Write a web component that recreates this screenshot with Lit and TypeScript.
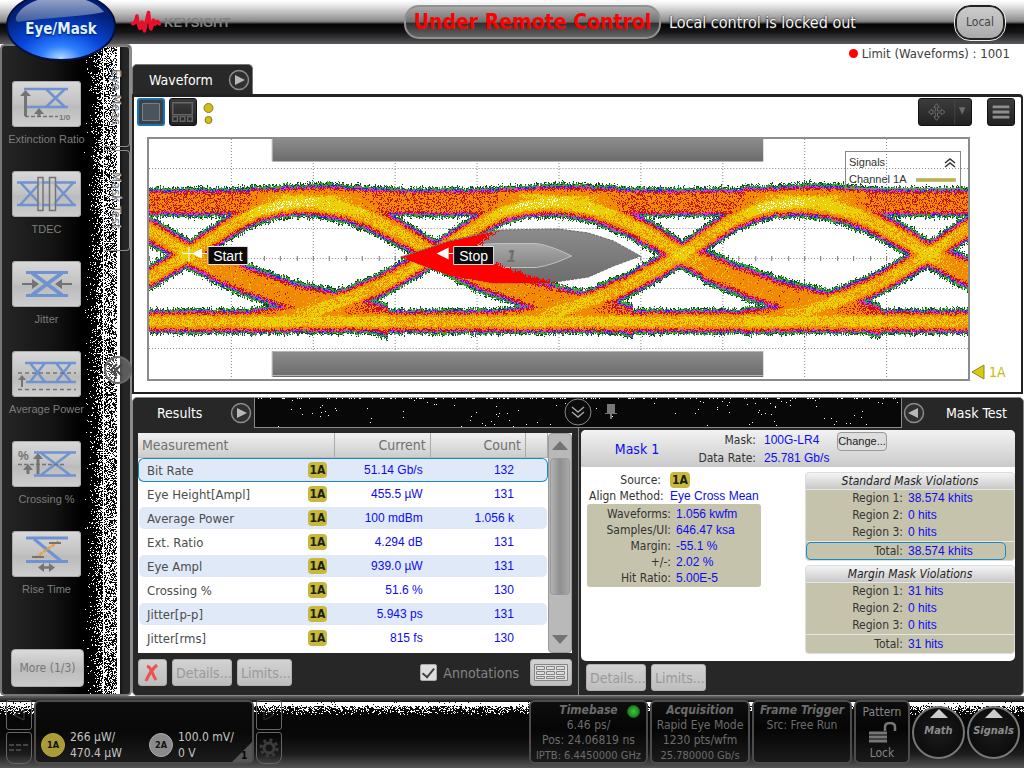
import { LitElement, html, css, svg } from "lit";
import { customElement } from "lit/decorators.js";
import { classMap } from "lit/directives/class-map.js";

// ---------- deterministic pixel painting helpers ----------

function randomSource(seed: number) {
  let s = seed;
  return () => {
    s = (s + 0x6d2b79f5) | 0;
    let t = Math.imul(s ^ (s >>> 15), 1 | s);
    t = (t + Math.imul(t ^ (t >>> 7), 61 | t)) ^ t;
    return ((t ^ (t >>> 14)) >>> 0) / 4294967296;
  };
}

function speckle(w: number, h: number, density: (x: number, y: number) => number, seed: number) {
  const rnd = randomSource(seed);
  let d = "";
  for (let y = 0; y < h; y++) {
    let start = -1;
    for (let x = 0; x <= w; x++) {
      const on = x < w && rnd() < density(x, y);
      if (on && start < 0) start = x;
      if (!on && start >= 0) {
        d += `M${start} ${y}h${x - start}v1h${start - x}z`;
        start = -1;
      }
    }
  }
  return d;
}

type Point = [number, number];

function along(points: Point[], x: number) {
  if (x <= points[0][0]) return points[0][1];
  for (let i = 1; i < points.length; i++) {
    if (x <= points[i][0]) {
      const [x0, y0] = points[i - 1];
      const [x1, y1] = points[i];
      return y0 + ((y1 - y0) * (x - x0)) / (x1 - x0);
    }
  }
  return points[points.length - 1][1];
}

function inside(poly: Point[], x: number, y: number) {
  let hit = false;
  for (let i = 0, j = poly.length - 1; i < poly.length; j = i++) {
    const [xi, yi] = poly[i];
    const [xj, yj] = poly[j];
    if (yi > y !== yj > y && x < ((xj - xi) * (y - yi)) / (yj - yi) + xi) hit = !hit;
  }
  return hit;
}

// ---------- eye diagram ----------

const PLOT_W = 820;
const PLOT_H = 240;
const CROSSINGS = [-208, 39, 285, 533, 780, 1027];

// Vertical centre of the rising and falling edges, by distance from a crossing.
const RISING: Point[] = [[-185, 182], [-150, 178], [-120, 171], [-93, 162], [-56, 147], [-25, 130], [0, 115], [25, 98], [48, 83], [70, 72], [90, 66], [115, 63], [150, 62], [185, 62]];
const FALLING: Point[] = [[-185, 62], [-150, 62], [-120, 63], [-93, 68], [-70, 76], [-53, 84], [-25, 99], [0, 115], [25, 127], [53, 139], [80, 149], [103, 157], [130, 163], [155, 169], [180, 176], [200, 182]];

// Strength of each edge: it fades where the edge settles on a rail.
const RISING_CAP: Point[] = [[-185, 0.4], [-140, 0.72], [-110, 0.8], [0, 0.84], [50, 0.84], [90, 0.96], [125, 0.93], [185, 0.5]];
const FALLING_CAP: Point[] = [[-185, 0.5], [-140, 0.84], [-90, 0.86], [0, 0.84], [30, 0.7], [130, 0.66], [200, 0.45]];

const MASK: Point[] = [[252, 118], [300, 102], [350, 91], [410, 90], [440, 94], [465, 102], [492, 117], [465, 127], [440, 138], [400, 144], [345, 144], [300, 136]];
const HITS: Point[] = [[250, 117], [300, 95], [352, 86], [341, 96], [328, 107], [328, 128], [360, 135], [398, 148], [345, 150], [300, 140]];

const COLORS = ["#0d4a16", "#2cae2c", "#2a1ef0", "#f22ee0", "#c3160f", "#f08a06", "#ead006", "#fffbe6", "#ff0000"];

function level(v: number) {
  if (v <= 0) return -1;
  if (v < 0.06) return 0;
  if (v < 0.2) return 1;
  if (v < 0.27) return 2;
  if (v < 0.37) return 3;
  if (v < 0.52) return 4;
  if (v < 0.82) return 5;
  if (v < 1.1) return 6;
  return 7;
}

// Soft rim, then a quick climb to a flat core.
function profile(p: number, cap: number) {
  return Math.min(p < 0.3 ? p * 1.25 : 0.375 + (p - 0.3) * 1.2, cap);
}

function paintEye() {
  const rnd = randomSource(7);
  const paths = COLORS.map(() => "");
  const field: number[][] = [];
  for (let x = 0; x < PLOT_W; x++) {
    const bands: number[][] = [];
    let hump = 0;
    for (let i = 0; i < CROSSINGS.length; i++) {
      const d = x - CROSSINGS[i];
      const mid = (x - (CROSSINGS[i] + 132)) / 50;
      hump = Math.max(hump, Math.exp(-mid * mid));
      if (d > -185 && d < 185) bands.push([along(RISING, d), 14, along(RISING_CAP, d)]);
      if (d > -185 && d < 200) bands.push([along(FALLING, d), d > 20 ? 18 : 16, along(FALLING_CAP, d)]);
    }
    bands.push([63 - hump * 2, 15 + hump * 3, 0.56]);
    bands.push([182, 13, 0.84]);
    const up = rnd() * 3 - 1.5;
    const col: number[] = [];
    for (let y = 0; y < PLOT_H; y++) {
      let best = -1;
      let total = 0;
      for (const [c, h, cap] of bands) {
        const p = 1 - Math.abs(y - c) / (h + up);
        if (p > 0) {
          const q = profile(p, cap);
          best = Math.max(best, q);
          total += q;
        } else best = Math.max(best, p * 0.9);
      }
      let v = best;
      if (best > 0) v = best + Math.min(0.1, (total - best) * 0.12);
      const grain = rnd() + rnd() - 1;
      v += grain * (v > 0.3 ? 0.2 : 0.12);
      if (y < 42) v = Math.min(v, 0.1);
      col.push(v);
    }
    field.push(col);
  }
  for (let y = 0; y < PLOT_H; y++) {
    let start = 0;
    let cur = -1;
    for (let x = 0; x <= PLOT_W; x++) {
      let k = -1;
      if (x < PLOT_W) {
        k = level(field[x][y]);
        if (y > 88 && y < 146 && inside(MASK, x, y)) {
          const ragged = inside(HITS, x + Math.round(rnd() * 8 - 4), y);
          if (k >= 0 || ragged) k = 8;
        }
      }
      if (k !== cur) {
        if (cur >= 0) paths[cur] += `M${start} ${y}h${x - start}v1h${start - x}z`;
        start = x;
        cur = k;
      }
    }
  }
  return paths;
}

const EYE = paintEye();
const SIDE_NOISE = speckle(38, 650, (x) => {
  if (x > 34) return 1;
  if (x > 22) return 0.52;
  if (x === 21) return 1;
  return Math.pow(x / 22, 2) * 0.5;
}, 11);
const FOOT_NOISE = speckle(1024, 16, (_x, y) => (y < 4 ? 0.97 : Math.max(0, 0.55 - (y - 4) * 0.06)), 23);
const STRIP_NOISE = speckle(650, 29, (_x, y) => (y < 1 ? 0.2 : 0.005), 31);

const baseStyles = css`
  :host { display: block; box-sizing: border-box; font-family: "DejaVu Sans Condensed", "DejaVu Sans", sans-serif; }
  * { box-sizing: border-box; }
  button { font-family: inherit; margin: 0; padding: 0; border: 0; cursor: pointer; background: none; }
  svg { display: block; }
`;

const roundArrow = (left: boolean) => svg`
  <circle cx="11" cy="11" r="9.5" fill="#303030" stroke="#8c8c8c" stroke-width="1.5"/>
  <path d=${left ? "M15 6v10L5 11z" : "M7 6v10l10-5z"} fill="#b8b8b8"/>`;

// ---------- header ----------

@customElement("scope-header")
class ScopeHeader extends LitElement {
  static styles = [baseStyles, css`
    :host { position: relative; z-index: 2; }
    .bar { height: 44px; display: flex; align-items: center; background: linear-gradient(#fff 0, #f0f0f0 4px, #8c8c8c 21px, #4a4a4a 23px, #050505 24px, #141414 32px, #5a585c 44px); }
    .menu { position: absolute; left: 6px; top: -9px; width: 110px; height: 70px; }
    .menu svg { width: 100%; height: 100%; }
    .menu span { position: absolute; inset: 0; display: grid; place-items: center; padding-top: 6px; color: #dff0ff; font-weight: bold; font-size: 15px; text-shadow: 0 1px 2px #001a50; }
    .brand { flex: 0 0 273px; margin-left: 131px; display: flex; align-items: center; gap: 3px; color: #808080; font: bold 13px "Liberation Sans", sans-serif; }
    .remote { height: 34px; width: 257px; flex: none; border: 2px solid #929292; border-radius: 15px; background: linear-gradient(#aaa, #6e6e6e 50%, #303030 54%, #666); color: #f00; font-weight: bold; font-size: 21px; line-height: 30px; text-align: center; white-space: nowrap; }
    .locked { flex: 1; margin-left: 8px; color: #f4f4f4; font-size: 16px; text-shadow: 0 0 2px #000, 0 1px 1px #333; white-space: nowrap; }
    .local { width: 50px; height: 35px; margin-right: 19px; border: 2px solid #222; outline: 1px solid #eee; border-radius: 15px; background: linear-gradient(#ccc, #aaa); font-size: 12px; color: #444; }
  `];
  render() {
    return html`
      <header class="bar">
        <div class="brand">
          <svg width="30" height="25" viewBox="0 0 30 25"><path d="M1.500 13.500Q4 15 6 6Q7 15 9 18.500Q10.500 15 11 12Q12 18 13.500 21Q16 8 17.500 2.500Q19 15 20 19Q22 15 22.500 10Q24 17 25.500 12Q26.500 10 28.500 14" fill="none" stroke="#e8102c" stroke-width="3.500" stroke-linejoin="round" stroke-linecap="round"/></svg>
          KEYSIGHT
        </div>
        <div class="remote">Under Remote Control</div>
        <div class="locked">Local control is locked out</div>
        <button class="local">Local</button>
      </header>
      <button class="menu">
        <svg viewBox="0 0 110 70">
          <defs>
            <radialGradient id="orb" cx=".5" cy=".98" r=".75"><stop offset="0" stop-color="#b5dcff"/><stop offset=".25" stop-color="#2f80ff"/><stop offset=".55" stop-color="#0646d8"/><stop offset="1" stop-color="#021f78"/></radialGradient>
            <linearGradient id="gloss" x2="0" y2="1"><stop offset="0" stop-color="#e0e8f4"/><stop offset="1" stop-color="#5570a4"/></linearGradient>
          </defs>
          <ellipse cx="55" cy="35" rx="54" ry="34" fill="url(#orb)" stroke="#05103c" stroke-width="2"/>
          <path d="M13 21C30 0 82 0 98 21C75 26 45 26 12 31C8 29 10 25 13 21Z" fill="url(#gloss)" opacity=".7"/>
        </svg>
        <span>Eye/Mask</span>
      </button>`;
  }
}

// ---------- side bar ----------

const B = "#6f93d0";
const G = "#747474";
const tools = [
  { name: "Extinction Ratio", icon: svg`<path d="M12 8H56M14 26H56M34 8L53 26M53 8L34 26" stroke=${B} stroke-width="2.5"/><path d="M13.500 35V12" stroke=${G} stroke-width="3"/><path d="M8 15l5.500-6 5.500 6zM22 33l5-6 5 6z" fill=${G}/><path d="M27 32v3" stroke=${G} stroke-width="3"/><path d="M13 35.500H46" stroke=${G} stroke-width="1.500" stroke-dasharray="4 2"/><text x="47" y="39" font-size="8" font-weight="bold" fill=${G}>1/0</text>` },
  { name: "TDEC", icon: svg`<path d="M5 11.500H64M5 34H64M8 11L29 34M29 11L8 34M41 11L62 34M62 11L41 34" stroke=${B} stroke-width="2.500"/><path d="M26 6.500h5v33h-5zM37.500 6.500h6v33h-6z" fill="#ccc" fill-opacity=".6" stroke=${G} stroke-width="1.500"/>` },
  { name: "Jitter", icon: svg`<path d="M14 11.500H56M14 34.500H56" stroke=${B} stroke-width="3"/><path d="M20 12L50 34M50 12L20 34" stroke=${B} stroke-width="4"/><path d="M10 23H22M60 23H48" stroke=${G} stroke-width="2"/><path d="M20 18v10l7-5zM50 18v10l-7-5z" fill=${G}/>` },
  { name: "Average Power", icon: svg`<path d="M13 12H64M14 31H64M18 12L33 31M33 12L18 31M44 12L59 31M59 12L44 31" stroke=${B} stroke-width="2.500"/><path d="M6 22H64M6 38.500H64" stroke=${G} stroke-width="1.500" stroke-dasharray="4 3"/><path d="M10 36V27" stroke=${G} stroke-width="2"/><path d="M6 29l4-5 4 5z" fill=${G}/>` },
  { name: "Crossing %", icon: svg`<path d="M22 11.500H64M22 34.500H64M29 12L58 34M58 12L29 34" stroke=${B} stroke-width="2.500"/><path d="M6 23.500H52" stroke=${G} stroke-width="1.500" stroke-dasharray="4 2"/><path d="M16 33V28M26 33V16" stroke=${G} stroke-width="3"/><path d="M11 29l5-6 5 6zM21 18l5-6 5 6z" fill=${G}/><text x="6" y="19" font-size="12" font-weight="bold" fill=${G}>%</text>` },
  { name: "Rise Time", icon: svg`<path d="M14 7H56M14 30.500H56" stroke=${B} stroke-width="3"/><path d="M22 8L49 30" stroke=${B} stroke-width="3"/><path d="M23 27L47 10" stroke="#eaa040" stroke-width="2.500" stroke-dasharray="4 1"/><path d="M20 26h12M37 12h12" stroke=${G} stroke-width="2"/><path d="M29 36.500h12" stroke=${G} stroke-width="2.500"/><path d="M32 32l-6 4.500 6 4.500zM37 32l6 4.500-6 4.500z" fill=${G}/>` },
];

@customElement("scope-sidebar")
class ScopeSidebar extends LitElement {
  static styles = [baseStyles, css`
    :host { position: relative; display: grid; grid-template-columns: 102px 1fr; background: linear-gradient(90deg, #262626, #141414 50px, #000 80px, #000 102px, #0a0a0a 116px, #262626 122px); border: 2px solid #777; border-right-color: #8b8b8b; border-radius: 5px; min-height: 0; }
    .noise { position: absolute; left: 80px; top: 0; width: 38px; height: 100%; }
    .tools { position: relative; display: flex; flex-direction: column; align-items: flex-start; padding: 35px 0 7px 9px; gap: 24px; }
    .tool { width: 71px; height: 66px; display: flex; flex-direction: column; align-items: center; gap: 4px; color: #7c7c7c; font: 11px/16px "Liberation Sans Narrow", "Liberation Sans", sans-serif; white-space: nowrap; }
    .face { flex: none; width: 69px; height: 46px; border-radius: 4px; background: linear-gradient(#d9d9d9, #c2c2c2 50%, #bbb 55%, #cfcfcf); box-shadow: inset 0 0 0 1px #aaa; }
    .more { margin-top: auto; width: 73px; height: 38px; flex: none; border: 1px solid #aaa; border-radius: 4px; background: linear-gradient(#dadada, #bdbdbd 55%, #cacaca); color: #777; font-size: 12px; white-space: nowrap; }
    .tabs { position: relative; display: flex; flex-direction: column; gap: 3px; }
    .tab { height: 101px; border: 1px solid #8b8b8b; border-left: 0; border-radius: 0 4px 4px 0; writing-mode: vertical-rl; color: #777; font-size: 13px; text-align: center; text-shadow: 1px 0 #eee; }
    .fold { position: absolute; right: -2px; top: 310px; width: 28px; height: 28px; }
  `];
  render() {
    return html`
      <svg class="noise" viewBox="0 0 38 650" preserveAspectRatio="none" shape-rendering="crispEdges"><path d=${SIDE_NOISE} fill="#fff"/></svg>
      <nav class="tools">
        ${tools.map((t) => html`<button class="tool"><svg class="face" viewBox="0 0 69 46" fill="none">${t.icon}</svg>${t.name}</button>`)}
        <button class="more">More (1/3)</button>
      </nav>
      <nav class="tabs">
        <button class="tab">Eye Meas</button>
        <button class="tab">Mask Test</button>
        <button class="fold" aria-label="Collapse"><svg viewBox="0 0 28 28" fill="none"><circle cx="14" cy="14" r="13" fill="#fff" fill-opacity=".25" stroke="#6a6a6a" stroke-width="2"/><path d="M13 8l-6 6 6 6M18 8l-6 6 6 6" stroke="#444" stroke-width="2"/></svg></button>
      </nav>`;
  }
}

// ---------- waveform panel ----------

@customElement("scope-waveform")
class ScopeWaveform extends LitElement {
  static styles = [baseStyles, css`
    :host { display: flex; flex-direction: column; min-height: 0; }
    .top { display: flex; align-items: flex-start; justify-content: space-between; height: 50px; }
    .tab { align-self: flex-end; width: 121px; height: 30px; display: flex; align-items: center; justify-content: space-between; padding: 0 2px 0 16px; border: 1px solid #777; border-bottom: 0; border-radius: 5px 5px 0 0; background: #282828; color: #fff; font-size: 14px; }
    .limit { display: flex; align-items: center; gap: 4px; padding: 2px 14px 0 0; font-size: 13px; color: #3c3c3c; }
    .led { width: 9px; height: 9px; border-radius: 50%; background: #f00; }
    .panel { flex: 1; min-height: 0; display: flex; flex-direction: column; margin-right: 1px; border: 2px solid #222; border-top-width: 3px; border-radius: 0 4px 0 0; background: #fff; }
    .toolbar { display: flex; gap: 4px; padding: 1px 6px 0 3px; height: 40px; }
    .push { flex: 1; }
    .tool { width: 28px; height: 28px; border: 1px solid #111; border-radius: 3px; background: linear-gradient(#3c3c3c, #222); }
    .tool.on { border: 2px solid #1673b8; background: #3b4246; }
    .tool svg { width: 100%; height: 100%; }
    .wide { width: 54px; }
    .gap { margin-left: 11px; }
    .view { flex: 1; min-height: 0; display: flex; padding: 0 0 11px 13px; }
    .plot { position: relative; flex: 1; min-width: 0; border: 2px solid #8c8c8c; }
    .plot > svg { width: 100%; height: 100%; }
    .axis { width: 51px; display: flex; flex-direction: column; justify-content: flex-end; color: #c7ba08; font-size: 14px; }
    .mark { display: flex; align-items: center; gap: 3px; }
    .legend { position: absolute; right: 7px; top: 12px; width: 116px; height: 38px; border: 1px solid #888; padding: 2px 4px 0 3px; font: 11px/17px "Liberation Sans", sans-serif; color: #333; }
    .line { display: flex; align-items: center; justify-content: space-between; white-space: nowrap; }
    .swatch { width: 40px; height: 4px; background: #c9b515; border: 1px solid #bba; }
  `];
  render() {
    const grid: string[] = [];
    for (let i = 1; i < 10; i++) grid.push(`M${i * 82 + 0.5} 0V240`);
    for (const y of [30, 60, 90, 120, 150, 180, 210]) grid.push(`M0 ${y - 0.5}H820`);
    const ticks: string[] = [];
    for (let i = 0; i < 51; i++) ticks.push(`M${Math.round(i * 16.4) + 0.5} 117v5`);
    return html`
      <div class="top">
        <div class="tab">Waveform <button aria-label="Next view"><svg width="22" height="22">${roundArrow(false)}</svg></button></div>
        <div class="limit"><span class="led"></span>Limit (Waveforms) : 1001</div>
      </div>
      <section class="panel">
        <div class="toolbar">
          <button class="tool on" aria-label="Single view"><svg viewBox="0 0 24 24"><path d="M3.500 3.500h17v17h-17z" fill="#4b545b" stroke="#76818c"/></svg></button>
          <button class="tool" aria-label="Tiled view"><svg viewBox="0 0 28 28" fill="none" stroke="#666" stroke-width="1.500"><path d="M3 4h21v13H3zM3 19h5v5H3zM11 19h5v5h-5zM19 19h5v5h-5z"/></svg></button>
          <svg width="16" height="28"><circle cx="7.500" cy="10" r="4.500" fill="#d2bd12" stroke="#8a7b20"/><circle cx="7.500" cy="22" r="3.500" fill="#d2bd12" stroke="#8a7b20"/></svg>
          <span class="push"></span>
          <button class="tool wide" aria-label="Pan"><svg viewBox="0 0 54 28" fill="none"><path d="M18 5l3 4h-2v4h4v-2l4 3-4 3v-2h-4v4h2l-3 4-3-4h2v-4h-4v2l-4-3 4-3v2h4V9h-2z" stroke="#6c6c6c"/><path d="M37.500 1v26" stroke="#444"/><path d="M42 9h7l-3.500 8z" fill="#6c6c6c"/></svg></button>
          <button class="tool gap" aria-label="Menu"><svg viewBox="0 0 28 28"><path d="M5 8.500h18M5 14h18M5 19.500h18" stroke="#8e8e8e" stroke-width="3"/></svg></button>
        </div>
        <div class="view">
          <div class="plot">
            <svg viewBox="0 0 820 240" preserveAspectRatio="none">
              <defs>
                <linearGradient id="mask" x2="0" y2="1"><stop offset="0" stop-color="#8c8c8c"/><stop offset="1" stop-color="#6c6c6c"/></linearGradient>
                <linearGradient id="core" x2="0" y2="1"><stop offset="0" stop-color="#aaa"/><stop offset="1" stop-color="#858585"/></linearGradient>
              </defs>
              <path d=${grid.join("")} stroke="#888" stroke-dasharray="1 2" shape-rendering="crispEdges"/>
              <path d=${ticks.join("")} stroke="#777" shape-rendering="crispEdges"/>
              <path d="M123 0H615V22H123z" fill="url(#mask)"/>
              <path d="M123 212H615V238H123z" fill="url(#mask)"/>
              <path d="M123.500 0V22.500H615M123.500 238V212.500H615M123 236.500H615" fill="none" stroke="#b5b5b5"/>
              <g shape-rendering="crispEdges">${EYE.slice(0, 8).map((d, i) => svg`<path d=${d} fill=${COLORS[i]}/>`)}</g>
              <path d=${"M" + MASK.map((p) => p.join(" ")).join("L") + "Z"} fill="url(#mask)" stroke="#666" stroke-dasharray="3 1"/>
              <path d="M290 117Q325 104 350 104.500H388Q404 107 423 117Q404 126 388 128.500H350Q325 128 290 117Z" fill="url(#core)" stroke="#c2c2c2"/>
              <text x="358" y="123" font-family="DejaVu Sans Condensed, DejaVu Sans, sans-serif" font-size="16" font-style="italic" font-weight="bold" fill="#707070">1</text>
              <path d=${EYE[8]} fill=${COLORS[8]} shape-rendering="crispEdges"/>
              <path d="M43 114.500l10-5v10zM288 114.500l12-6v12z" fill="#fff"/><path d="M34 114.500h24M300 114.500h7M40 108v14" stroke="#fff"/>
              <g font-family="Liberation Sans, sans-serif" font-size="14" fill="#fff" text-anchor="middle">
                <path d="M59 107.500h40v18h-40zM305 107.500h40v18h-40z" fill="#0b0b0b" stroke="#e4e4e4"/>
                <text x="79" y="122">Start</text><text x="325" y="122">Stop</text>
              </g>
            </svg>
            <div class="legend">
              <div class="line">Signals <svg width="12" height="10" fill="none" stroke="#333" stroke-width="1.500"><path d="M1 5l5-4 5 4M1 9l5-4 5 4"/></svg></div>
              <div class="line">Channel 1A <span class="swatch"></span></div>
            </div>
          </div>
          <div class="axis"><div class="mark"><svg width="16" height="18"><path d="M2 9l12-7v14z" fill="#d8cb10" stroke="#8a8530"/></svg>1A</div></div>
        </div>
      </section>`;
  }
}

// ---------- results and mask test ----------

const rows: string[][] = [
  ["Bit Rate", "51.14 Gb/s", "132"],
  ["Eye Height[Ampl]", "455.5 µW", "131"],
  ["Average Power", "100 mdBm", "1.056 k"],
  ["Ext. Ratio", "4.294 dB", "131"],
  ["Eye Ampl", "939.0 µW", "131"],
  ["Crossing %", "51.6 %", "130"],
  ["Jitter[p-p]", "5.943 ps", "131"],
  ["Jitter[rms]", "815 fs", "130"],
];

const pairs = (list: string[][]) => list.map(([k, v]) => html`<dt>${k}:</dt><dd>${v}</dd>`);

@customElement("scope-results")
class ScopeResults extends LitElement {
  static styles = [baseStyles, css`
    :host { display: flex; flex-direction: column; min-height: 0; background: #272727; border: 1px solid #8a8a8a; border-radius: 5px; margin-top: 3px; }
    .strip { position: relative; display: flex; height: 30px; flex: none; }
    .tab { display: flex; align-items: center; justify-content: space-between; width: 121px; padding: 0 2px 0 24px; color: #fff; font-size: 14px; white-space: nowrap; }
    .tab.right { padding: 0 16px 0 1px; }
    .middle { flex: 1; min-width: 0; background: #080808; border: solid #8a8a8a; border-width: 0 1px 1px; }
    .middle svg { width: 100%; height: 100%; }
    .center { position: absolute; left: 50%; top: 0; transform: translateX(-14px); display: flex; gap: 12px; }
    .body { flex: 1; min-height: 0; display: grid; grid-template-columns: 1fr 1fr; }
    .half { display: flex; flex-direction: column; min-height: 0; padding: 5px 6px 9px 5px; }
    .half + .half { border-left: 1px solid #8a8a8a; padding: 2px 8px 4px 2px; }
    .half + .half .actions { padding: 3px 0 0 5px; }
    .list { flex: 1; min-height: 0; display: flex; background: #fff; }
    table { flex: 1; border-collapse: separate; border-spacing: 0; table-layout: fixed; align-self: flex-start; }
    th { height: 25px; padding: 0 4px; background: linear-gradient(#f0f0f0, #cdcdcd); color: #707070; font-size: 14px; font-weight: normal; text-align: right; border-right: 1px solid #aaa; border-bottom: 1px solid #bbb; white-space: nowrap; }
    th:first-child { text-align: left; }
    td { height: 24px; padding: 0 8px; border: solid transparent; border-width: 1px 0; background-clip: padding-box; text-align: right; color: #0c0cf0; font: 12px "Liberation Sans", sans-serif; white-space: nowrap; }
    td:nth-child(3) { padding-right: 12px; }
    td:first-child { text-align: left; border-left-width: 1px; border-radius: 6px 0 0 6px; }
    td:last-child { border-right-width: 1px; border-radius: 0 6px 6px 0; padding: 0; }
    tr:nth-child(odd) td { background-color: #e0e9f8; }
    tr.on td { border-color: #1687c8; }
    .name { display: flex; justify-content: space-between; align-items: center; font: 13px "DejaVu Sans Condensed", "DejaVu Sans", sans-serif; color: #4c4c4c; }
    .chip { padding: 0 2px; border-radius: 4px; background: #c6b93c; color: #1e1e14; font: bold 12px/16px "DejaVu Sans Condensed", "DejaVu Sans", sans-serif; }
    .scroll { width: 24px; display: flex; flex-direction: column; align-items: center; background: #b9b9b9; border: 1px solid #999; border-radius: 4px; }
    .arrow { width: 20px; height: 24px; display: grid; place-items: center; }
    .thumb { width: 20px; flex: 1; border: 1px solid #989898; border-radius: 4px; background: linear-gradient(90deg, #b4b4b4, #8f8f8f 50%, #a8a8a8); }
    .track { height: 33px; }
    .actions { display: flex; align-items: center; gap: 5px; padding-top: 6px; }
    .push { flex: 1; }
    .act { height: 27px; padding: 0 3px; border: 1px solid #b0b0b0; border-radius: 3px; background: linear-gradient(#d2d2d2, #bebebe); color: #999; font-size: 14px; min-width: 29px; white-space: nowrap; }
    .details { width: 60px; }
    .limits { width: 55px; }
    .annot { display: flex; align-items: center; gap: 6px; margin-right: 6px; color: #858585; font-size: 14px; white-space: nowrap; }
    input { appearance: none; width: 17px; height: 17px; margin: 0; border: 1px solid #aaa; border-radius: 2px; background: #dedede; display: grid; place-items: center; }
    input:checked::after { content: ""; width: 5px; height: 10px; border: solid #444; border-width: 0 2px 2px 0; transform: rotate(40deg) translate(-1px, -1px); }
    .card { flex: 1; min-height: 0; background: #fff; border-radius: 5px; overflow: hidden; }
    .head { height: 37px; display: grid; grid-template-columns: 112px auto 1fr; background: linear-gradient(#f2f2f2, #cacaca); }
    .title { align-self: center; text-align: center; color: #0c0cf0; font-size: 14px; }
    dl { margin: 0; display: grid; gap: 0 5px; align-content: start; grid-template-columns: auto 1fr; font-size: 12px; line-height: 17px; color: #333; white-space: nowrap; }
    dt { text-align: right; }
    dd { margin: 0; color: #0c0cf0; font-family: "Liberation Sans", sans-serif; }
    .head dl { grid-template-columns: 63px 65px; column-gap: 8px; padding-top: 1px; line-height: 18px; }
    .change { margin: 1px 0 0 8px; width: 50px; height: 19px; border: 1px solid #999; border-radius: 4px; background: #ddd; font: 11px "Liberation Sans", sans-serif; color: #222; }
    .cols { display: flex; justify-content: space-between; padding: 5px 0 0 6px; }
    .source { grid-template-columns: 72px auto; column-gap: 9px; padding-left: 2px; line-height: 16px; }
    .source .chip { display: inline-block; height: 16px; }
    .box { width: 174px; padding: 2px 0 1px; border-radius: 3px; background: #c6c3ac; grid-template-columns: 84px 1fr; line-height: 16px; }
    .viol { width: 210px; margin-bottom: 4px; border-radius: 4px; background: #c6c3ac; overflow: hidden; border: 1px solid #ddd; }
    h3 { margin: 0; background: linear-gradient(#f4f4f4, #c8c8c8); border-bottom: 1px solid #e6e6e6; font: italic 12px/16px "DejaVu Sans Condensed", "DejaVu Sans", sans-serif; color: #222; text-align: center; }
    .viol dl { grid-template-columns: 97px 1fr; }
    .viol .regions { border-bottom: 1px solid #e6e6e6; }
    .viol .total { grid-template-columns: 96px 1fr; border: 1px solid transparent; border-radius: 5px; margin-right: 8px; line-height: 16px; }
    .viol .total.on { border-color: #1687c8; }
    .w1 { width: 197px; } .w2 { width: 95px; } .w3 { width: 95px; } .w4 { width: 22px; }
  `];
  violations(title: string, v: string[], on: boolean) {
    return html`<div class="viol"><h3>${title}</h3>
      <dl class="regions">${pairs([["Region 1", v[0]], ["Region 2", v[1]], ["Region 3", v[2]]])}</dl>
      <dl class=${classMap({ total: true, on })}>${pairs([["Total", v[3]]])}</dl></div>`;
  }
  render() {
    return html`
      <div class="strip">
        <div class="tab">Results <button aria-label="Next"><svg width="22" height="22">${roundArrow(false)}</svg></button></div>
        <div class="middle"><svg viewBox="0 0 650 29" preserveAspectRatio="none" shape-rendering="crispEdges"><path d=${STRIP_NOISE} fill="#fff"/></svg></div>
        <div class="tab right"><button aria-label="Previous"><svg width="22" height="22">${roundArrow(true)}</svg></button> Mask Test</div>
        <div class="center">
          <button aria-label="Collapse results"><svg width="28" height="28" fill="none"><circle cx="14" cy="14" r="13" fill="#0c0c0c" stroke="#888"/><path d="M8 9l6 5 6-5M8 14l6 5 6-5" stroke="#a5a5a5" stroke-width="1.500"/></svg></button>
          <button aria-label="Pin"><svg width="14" height="22"><path d="M3 3h8v9H3zM1 12h12v1H1zM6 13h2v5H6z" fill="#777"/></svg></button>
        </div>
      </div>
      <div class="body">
        <section class="half">
          <div class="list">
            <table>
              <colgroup><col class="w1"><col class="w2"><col class="w3"><col class="w4"></colgroup>
              <thead><tr><th>Measurement</th><th>Current</th><th>Count</th><th></th></tr></thead>
              <tbody>${rows.map((r, i) => html`<tr class=${classMap({ on: i === 0 })}><td><div class="name">${r[0]} <span class="chip">1A</span></div></td><td>${r[1]}</td><td>${r[2]}</td><td></td></tr>`)}</tbody>
            </table>
            <div class="scroll">
              <button class="arrow" aria-label="Scroll up"><svg width="16" height="10"><path d="M8 0l8 9H0z" fill="#737373"/></svg></button>
              <div class="thumb"></div><div class="track"></div>
              <button class="arrow" aria-label="Scroll down"><svg width="16" height="10"><path d="M8 9L0 0h16z" fill="#737373"/></svg></button>
            </div>
          </div>
          <div class="actions">
            <button class="act" aria-label="Clear"><svg width="20" height="20" viewBox="0 0 20 20" fill="none" stroke="#f05050"><path d="M5 3q3 1 5 6t4 8" stroke-width="3"/><path d="M15 2Q8 8 4 18" stroke-width="3"/></svg></button>
            <button class="act details">Details...</button>
            <button class="act limits">Limits...</button>
            <span class="push"></span>
            <label class="annot"><input type="checkbox" checked>Annotations</label>
            <button class="act" aria-label="Table layout"><svg width="34" height="17" viewBox="0 0 34 17" fill="#ddd" stroke="#858585"><path d="M.5.500h33v16H.5z"/><path d="M2.500 2.500h8v3h-8zM12.500 2.500h8v3h-8zM22.500 2.500h8v3h-8zM2.500 7.500h8v3h-8zM12.500 7.500h8v3h-8zM22.500 7.500h8v3h-8zM2.500 12.500h8v2h-8zM12.500 12.500h8v2h-8zM22.500 12.500h8v2h-8z"/></svg></button>
          </div>
        </section>
        <section class="half">
          <div class="card">
            <div class="head">
              <div class="title">Mask 1</div>
              <dl>${pairs([["Mask", "100G-LR4"], ["Data Rate", "25.781 Gb/s"]])}</dl>
              <div><button class="change">Change...</button></div>
            </div>
            <div class="cols">
              <div>
                <dl class="source"><dt>Source:</dt><dd><span class="chip">1A</span></dd><dt>Align Method:</dt><dd>Eye Cross Mean</dd></dl>
                <dl class="box">${pairs([["Waveforms", "1.056 kwfm"], ["Samples/UI", "646.47 ksa"], ["Margin", "-55.1 %"], ["+/-", "2.02 %"], ["Hit Ratio", "5.00E-5"]])}</dl>
              </div>
              <div>
                ${this.violations("Standard Mask Violations", ["38.574 khits", "0 hits", "0 hits", "38.574 khits"], true)}
                ${this.violations("Margin Mask Violations", ["31 hits", "0 hits", "0 hits", "31 hits"], false)}
              </div>
            </div>
          </div>
          <div class="actions"><button class="act details">Details...</button><button class="act limits">Limits...</button></div>
        </section>
      </div>`;
  }
}

// ---------- footer ----------

@customElement("scope-footer")
class ScopeFooter extends LitElement {
  static styles = [baseStyles, css`
    :host { position: relative; display: flex; gap: 2px; height: 72px; padding: 4px 4px 4px 6px; background: linear-gradient(#666, #111 6px, #060606 20px, #080808 40px, #1c1c1c 58px, #555); font-size: 12px; color: #6c6c6c; white-space: nowrap; }
    button { color: inherit; font-size: 12px; }
    .noise { position: absolute; left: 0; top: 6px; width: 100%; height: 16px; }
    .stack, .signals, .card, .round { position: relative; }
    .stack { width: 26px; display: grid; grid-template-rows: 30px 32px; gap: 2px; }
    .stack button { border: 1px solid #666; display: grid; place-items: center; }
    .stack button:first-child { border-radius: 3px; }
    .stack button:last-child { border-radius: 3px 3px 8px 8px; }
    .signals { width: 220px; display: flex; align-items: flex-end; gap: 6px; padding: 0 0 1px 5px; border: 2px solid #4c4c4c; border-radius: 6px; background: linear-gradient(#0c0c0c, #080808 50%, #1c1c1c); color: #c4c4c4; line-height: 16px; }
    .ch { display: flex; align-items: center; gap: 5px; width: 102px; }
    .dot { width: 24px; height: 24px; flex: none; border: 1px solid #b7a935; border-radius: 50%; background: #a99b39; color: #111; font: bold 9px/22px "DejaVu Sans Condensed", sans-serif; text-align: center; }
    .dot.grey { background: #8b8b8b; border-color: #aaa; }
    .corner { position: absolute; right: 0; bottom: 0; }
    .push { flex: 1; }
    .card { display: flex; flex-direction: column; align-items: center; border: 2px solid #4c4c4c; border-radius: 6px; background: linear-gradient(#0e0e0e, #050505 45%, #1b1b1b); line-height: 15px; padding-top: 1px; overflow: hidden; }
    .card b { font-style: italic; }
    .c1 { width: 119px; } .c2 { width: 100px; } .c3 { width: 100px; } .c4 { width: 56px; padding: 3px 0 1px; justify-content: space-between; color: #858585; }
    .dense { font-size: 11px; }
    .led { position: absolute; right: 6px; top: 3px; width: 13px; height: 13px; border-radius: 50%; background: radial-gradient(#3bc93b, #087008); border: 1px solid #263; }
    .round { flex: none; width: 53px; height: 53px; margin-top: 6px; border: 2px solid #777; border-radius: 50%; background: radial-gradient(#1a1a1a, #080808); display: flex; flex-direction: column; align-items: center; gap: 6px; color: #8c8c8c; font: italic bold 11px "DejaVu Sans Condensed", sans-serif; }
  `];
  render() {
    return html`
      <svg class="noise" viewBox="0 0 1024 16" preserveAspectRatio="none" shape-rendering="crispEdges"><path d=${FOOT_NOISE} fill="#fff"/></svg>
      <div class="stack"><button aria-label="Previous"><svg width="14" height="14"><path d="M12 2v10L2 7z" fill="none" stroke="#444"/></svg></button><button aria-label="Keypad"><svg width="22" height="12"><path d="M1 2h5v2H1zM8 2h5v2H8zM15 2h5v2h-5zM1 7h5v2H1zM8 7h5v2H8z" fill="#444"/></svg></button></div>
      <div class="signals">
        <div class="ch"><span class="dot">1A</span><span>266 µW/<br>470.4 µW</span></div>
        <div class="ch"><span class="dot grey">2A</span><span>100.0 mV/<br>0 V</span></div>
        <svg class="corner" width="22" height="22"><path d="M22 2v20H2z" fill="#555"/><text x="11" y="19" font-size="10" font-weight="bold" fill="#050505">1</text></svg>
      </div>
      <div class="stack"><button aria-label="Next"><svg width="14" height="14"><path d="M2 2v10l10-5z" fill="none" stroke="#333"/></svg></button><button aria-label="Settings"><svg width="20" height="20" fill="none" stroke="#3c3c3c"><circle cx="10" cy="10" r="5" stroke-width="3"/><circle cx="10" cy="10" r="8" stroke-width="3" stroke-dasharray="3 3.300"/></svg></button></div>
      <span class="push"></span>
      <button class="card c1"><b>Timebase</b><span>6.46 ps/</span><span>Pos: 24.06819 ns</span><span class="dense">IPTB: 6.4450000 GHz</span><span class="led"></span></button>
      <button class="card c2"><b>Acquisition</b><span>Rapid Eye Mode</span><span>1230 pts/wfm</span><span class="dense">25.780000 Gb/s</span></button>
      <button class="card c3"><b>Frame Trigger</b><span>Src: Free Run</span></button>
      <button class="card c4">Pattern<svg width="30" height="22" fill="none"><path d="M18 9V5q0-4 5-4t5 4v4" stroke="#777" stroke-width="2.500"/><path d="M2 11h18M2 15h18M2 19h18" stroke="#777" stroke-width="3"/></svg>Lock</button>
      <button class="round"><svg width="20" height="10"><path d="M10 1l9 9H1z" fill="#ccc"/></svg>Math</button>
      <button class="round"><svg width="20" height="10"><path d="M10 1l9 9H1z" fill="#ccc"/></svg>Signals</button>`;
  }
}

@customElement("app-root")
class AppRoot extends LitElement {
  static styles = css`
    :host { display: grid; grid-template-rows: 44px minmax(0, 1fr) 72px; height: 100vh; overflow: hidden; background: #fff; }
    .main { display: grid; grid-template-columns: 132px minmax(0, 1fr); min-height: 0; }
    .stage { display: grid; grid-template-rows: minmax(0, 350fr) minmax(0, 302fr); min-height: 0; min-width: 0; }
  `;
  render() {
    return html`
      <scope-header></scope-header>
      <main class="main">
        <scope-sidebar></scope-sidebar>
        <div class="stage"><scope-waveform></scope-waveform><scope-results></scope-results></div>
      </main>
      <scope-footer></scope-footer>`;
  }
}
